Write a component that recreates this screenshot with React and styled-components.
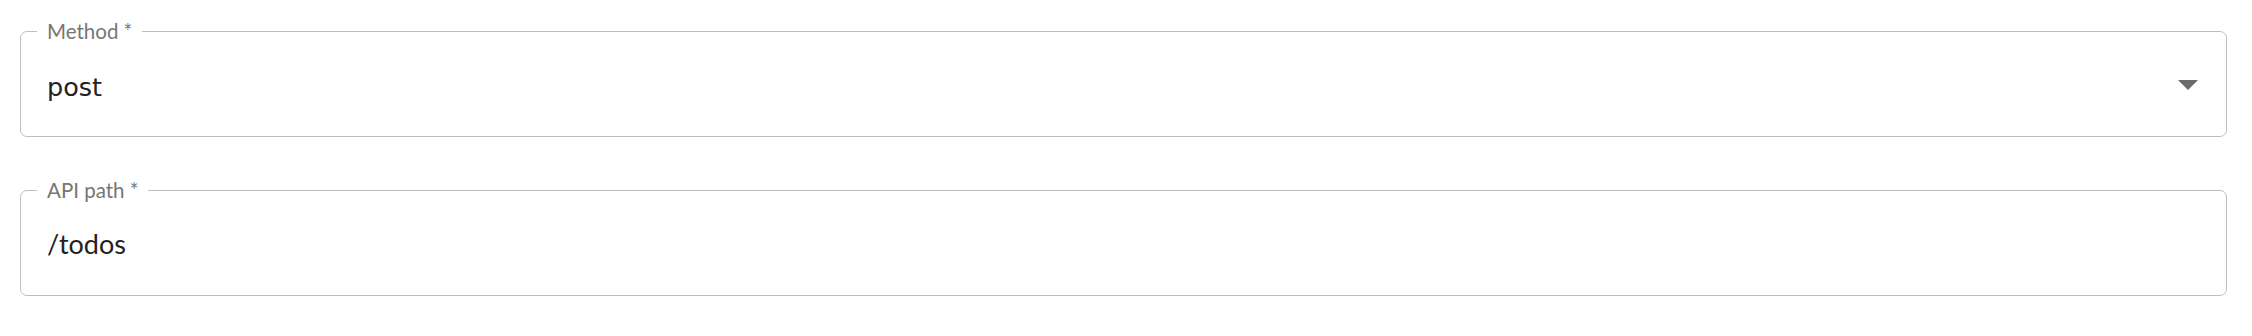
import React from "react";
import styled, { createGlobalStyle } from "styled-components";

const GlobalStyle = createGlobalStyle`
  html, body {
    margin: 0;
    padding: 0;
    background: #ffffff;
  }
  body {
    font-family: "Lato", "Noto Sans", sans-serif;
  }
`;

const Page = styled.div`
  width: 2252px;
  height: 336px;
  box-sizing: border-box;
  padding: 20px 25px 0 20px;
  display: flex;
  flex-direction: column;
  gap: 42px;
`;

const Field = styled.fieldset`
  margin: 0;
  padding: 0;
  border: 1.5px solid #bfbfbf;
  border-radius: 7px;
  min-width: 0;
`;

const Legend = styled.legend`
  margin-left: 16px;
  padding: 0 10px;
  font-family: "Lato", "Noto Sans", sans-serif;
  font-size: 20.5px;
  line-height: 22px;
  color: #767676;
`;

const Row = styled.div`
  height: 94px;
  box-sizing: border-box;
  padding: 0 28px 9px 26px;
  display: flex;
  align-items: center;
  justify-content: space-between;
`;

const Value = styled.span`
  font-family: ${(p) =>
    p.$select ? '"DejaVu Sans", sans-serif' : '"Lato", "Noto Sans", sans-serif'};
  font-size: ${(p) => (p.$select ? "25.5px" : "27px")};
  padding-top: ${(p) => (p.$select ? "6px" : "0")};
  line-height: 1;
  color: #222222;
`;

const Arrow = styled.svg`
  width: 20px;
  height: 10px;
  fill: #6b6b6b;
`;

function SelectField({ label, value }) {
  return (
    <Field>
      <Legend>{label}</Legend>
      <Row>
        <Value $select>{value}</Value>
        <Arrow viewBox="0 0 20 10">
          <path d="M0 0h20L10 10z" />
        </Arrow>
      </Row>
    </Field>
  );
}

function TextField({ label, value }) {
  return (
    <Field>
      <Legend>{label}</Legend>
      <Row>
        <Value>{value}</Value>
      </Row>
    </Field>
  );
}

export default function App() {
  return (
    <>
      <GlobalStyle />
      <Page>
        <SelectField label="Method *" value="post" />
        <TextField label="API path *" value="/todos" />
      </Page>
    </>
  );
}
